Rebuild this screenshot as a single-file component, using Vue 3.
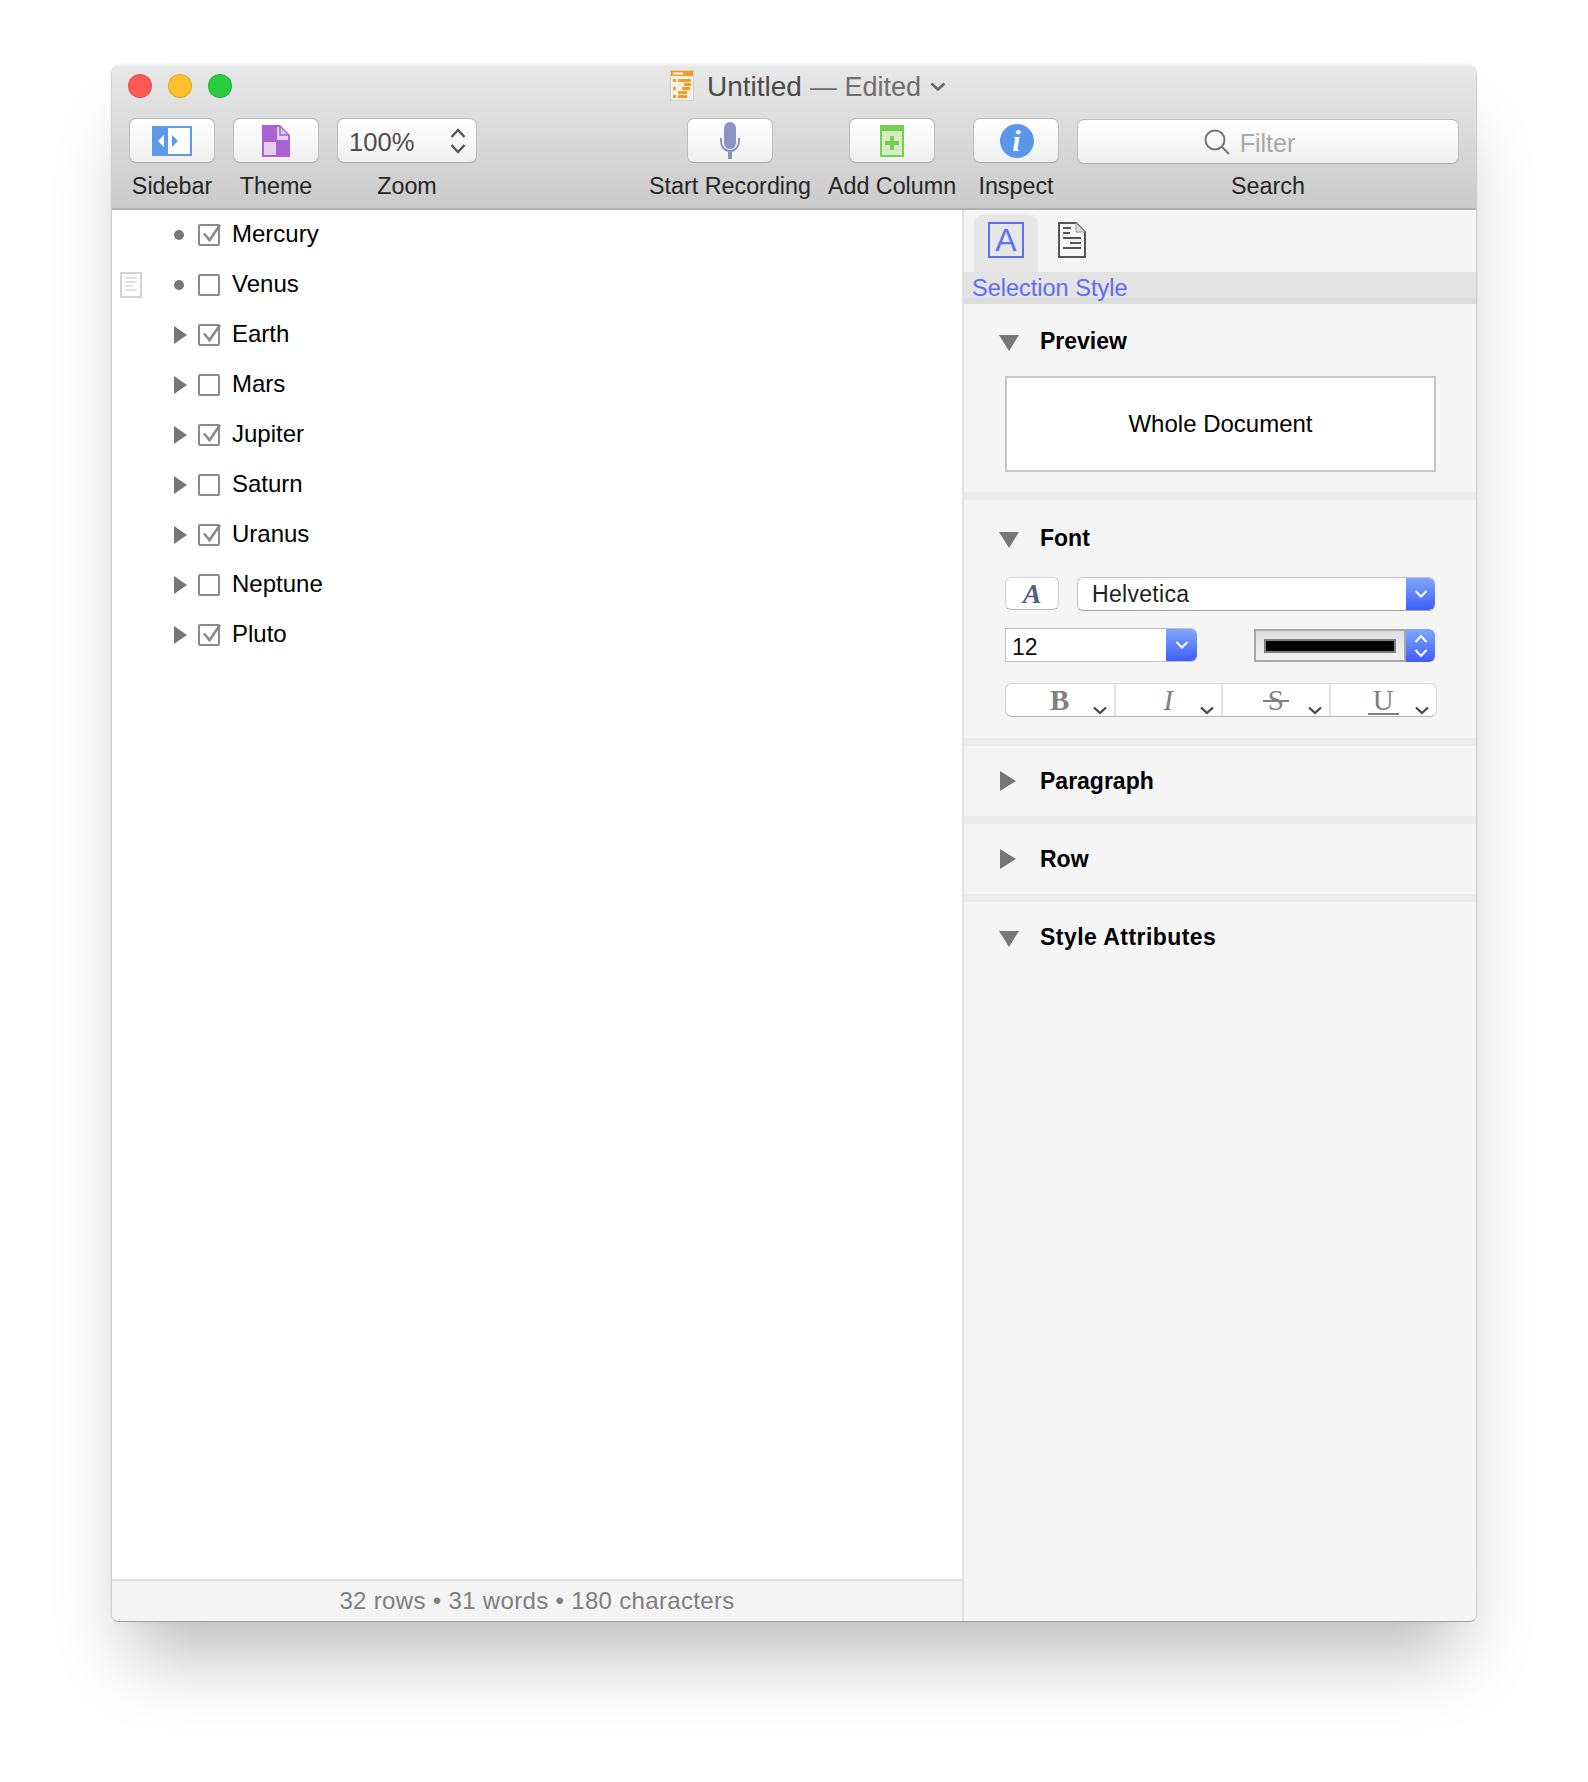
<template>
  <div class="page">
    <div class="window">
      <header class="toolbar">
        <div class="titlebar">
          <div class="lights">
            <span class="light red"></span>
            <span class="light yellow"></span>
            <span class="light green"></span>
          </div>
          <div class="doc-title">
            <svg width="24" height="31" viewBox="0 0 24 31">
              <rect x="0.5" y="0.5" width="23" height="30" fill="#f4f1e8" stroke="#cfcfcf" />
              <rect x="1" y="1" width="22" height="5" fill="#f79a1f" />
              <rect x="3" y="2.5" width="10" height="2" fill="#fff" />
              <rect x="3" y="9" width="3" height="3" fill="#f79a1f" />
              <rect x="8" y="9" width="13" height="3" fill="#f79a1f" />
              <rect x="14" y="13" width="7" height="3" fill="#f79a1f" />
              <rect x="3" y="17" width="3" height="3" fill="#f79a1f" />
              <rect x="12" y="17" width="8" height="3" fill="#f79a1f" />
              <rect x="8" y="21" width="9" height="3" fill="#f79a1f" />
              <rect x="3" y="25" width="3" height="3" fill="#f79a1f" />
              <rect x="8" y="25" width="9" height="3" fill="#f79a1f" />
            </svg>
            <span class="doc-name">Untitled</span>
            <span class="doc-state">— Edited</span>
            <svg class="doc-chevron" width="16" height="10" viewBox="0 0 16 10">
              <path d="M1.5 1.5 L8 7.5 L14.5 1.5" fill="none" stroke="#666" stroke-width="2.4" />
            </svg>
          </div>
        </div>

        <div class="tools">
          <div class="tool sidebar">
            <button class="tbtn">
              <svg width="40" height="30" viewBox="0 0 40 30">
                <rect x="1" y="1" width="38" height="28" fill="#fff" stroke="#5e98ec" stroke-width="2" />
                <rect x="0" y="0" width="16" height="30" fill="#5e98ec" />
                <path d="M12 9 V21 L6 15 Z" fill="#fff" />
                <path d="M20 9 V21 L26 15 Z" fill="#5e98ec" />
              </svg>
            </button>
            <span class="tool-label">Sidebar</span>
          </div>
          <div class="tool theme">
            <button class="tbtn">
              <svg width="28" height="32" viewBox="0 0 28 32">
                <path d="M0 0 H18 L28 10 V32 H0 Z" fill="#a962cf" />
                <path d="M15 2 H18 L26 10 V15 H15 Z" fill="#e1cfeb" />
                <rect x="2" y="17" width="12" height="13" fill="#e1cfeb" />
                <path d="M18 1 V10 H27" fill="none" stroke="#a962cf" stroke-width="1.5" />
              </svg>
            </button>
            <span class="tool-label">Theme</span>
          </div>
          <div class="tool zoom">
            <button class="tbtn zoom-btn">
              <span class="zoom-value">100%</span>
              <svg width="16" height="26" viewBox="0 0 16 26">
                <path d="M1.5 9 L8 2 L14.5 9" fill="none" stroke="#555" stroke-width="2.4" />
                <path d="M1.5 17 L8 24 L14.5 17" fill="none" stroke="#555" stroke-width="2.4" />
              </svg>
            </button>
            <span class="tool-label">Zoom</span>
          </div>
          <div class="tool recording">
            <button class="tbtn">
              <svg width="20" height="37" viewBox="0 0 20 37">
                <rect x="4" y="0" width="12" height="27" rx="6" fill="#8a93c2" />
                <path d="M1 16 V19 C1 25 5 29 10 29 C15 29 19 25 19 19 V16" fill="none" stroke="#8a93c2" stroke-width="2" />
                <rect x="8" y="29" width="4" height="8" fill="#8a93c2" />
              </svg>
            </button>
            <span class="tool-label">Start Recording</span>
          </div>
          <div class="tool column">
            <button class="tbtn">
              <svg width="24" height="32" viewBox="0 0 24 32">
                <rect x="1" y="1" width="22" height="30" fill="#d6ecc8" stroke="#72d24a" stroke-width="2" />
                <rect x="1" y="1" width="22" height="5" fill="#72d24a" />
                <path d="M12 11 V25 M5 18 H19" stroke="#72d24a" stroke-width="4" />
              </svg>
            </button>
            <span class="tool-label">Add Column</span>
          </div>
          <div class="tool inspect">
            <button class="tbtn">
              <span class="info">i</span>
            </button>
            <span class="tool-label">Inspect</span>
          </div>
          <div class="tool search">
            <div class="search-field">
              <svg width="26" height="26" viewBox="0 0 26 26">
                <circle cx="11" cy="11" r="9.5" fill="none" stroke="#757575" stroke-width="2" />
                <path d="M17.5 17.5 L25 25" stroke="#757575" stroke-width="2" />
              </svg>
              <span class="filter">Filter</span>
            </div>
            <span class="tool-label">Search</span>
          </div>
        </div>
      </header>

      <div class="body">
        <main class="outline">
          <div class="rows">
            <div v-for="row in rows" :key="row.name" class="row">
              <div class="gutter">
                <svg v-if="row.note" width="22" height="26" viewBox="0 0 22 26">
                  <rect x="1" y="1" width="20" height="24" fill="#fff" stroke="#d2d2d2" stroke-width="2" />
                  <path d="M5 6 H17 M5 10 H17 M5 14 H13 M5 18 H17" stroke="#e2e2e2" stroke-width="2" />
                </svg>
              </div>
              <div class="marker">
                <span v-if="row.leaf" class="bullet"></span>
                <svg v-else width="13" height="18" viewBox="0 0 13 18">
                  <path d="M0 0 L13 9 L0 18 Z" fill="#777" />
                </svg>
              </div>
              <span class="check">
                <svg v-if="row.checked" width="24" height="24" viewBox="0 0 24 24">
                  <path d="M5 10.5 L10.5 17 L21 2" fill="none" stroke="#8a8a8a" stroke-width="2.6" />
                </svg>
              </span>
              <span class="row-name">{{ row.name }}</span>
            </div>
          </div>
          <footer class="status">32 rows • 31 words • 180 characters</footer>
        </main>

        <aside class="inspector">
          <div class="tabs">
            <div class="tab active">
              <span class="tab-a">A</span>
            </div>
            <div class="tab doc-tab">
              <svg width="28" height="36" viewBox="0 0 28 36">
                <path d="M1 1 H18 L27 10 V35 H1 Z" fill="none" stroke="#555" stroke-width="2" />
                <path d="M18 1 V10 H27" fill="#ddd" stroke="#999" stroke-width="1" />
                <path d="M5 6 H13 M5 11 H12 M5 16 H23 M12 21 H23 M5 26 H23" stroke="#555" stroke-width="2" />
              </svg>
            </div>
          </div>
          <div class="band">Selection Style</div>

          <section class="section preview-section">
            <div class="sec-head">
              <svg class="tri" width="20" height="16" viewBox="0 0 20 16"><path d="M0 0 H20 L10 16 Z" fill="#777" /></svg>
              <span>Preview</span>
            </div>
            <div class="preview">Whole Document</div>
          </section>

          <section class="section font-section">
            <div class="sec-head">
              <svg class="tri" width="20" height="16" viewBox="0 0 20 16"><path d="M0 0 H20 L10 16 Z" fill="#777" /></svg>
              <span>Font</span>
            </div>
            <div class="font-row first">
              <button class="a-btn">A</button>
              <div class="select">
                <span class="select-text">Helvetica</span>
                <span class="blue-cap">
                  <svg width="14" height="10" viewBox="0 0 14 10"><path d="M1.5 2 L7 7.5 L12.5 2" fill="none" stroke="#fff" stroke-width="2" /></svg>
                </span>
              </div>
            </div>
            <div class="font-row second">
              <div class="combo">
                <span class="combo-text">12</span>
                <span class="blue-cap wide">
                  <svg width="14" height="10" viewBox="0 0 14 10"><path d="M1.5 2 L7 7.5 L12.5 2" fill="none" stroke="#fff" stroke-width="2" /></svg>
                </span>
              </div>
              <div class="color-pick">
                <div class="well"><span class="swatch"></span></div>
                <span class="blue-cap">
                  <svg width="14" height="26" viewBox="0 0 14 26">
                    <path d="M1.5 9 L7 3 L12.5 9 M1.5 17 L7 23 L12.5 17" fill="none" stroke="#fff" stroke-width="2" />
                  </svg>
                </span>
              </div>
            </div>
            <div class="styles">
              <div v-for="s in textStyles" :key="s.key" class="style-cell">
                <span class="style-letter" :class="s.key">{{ s.label }}</span>
                <svg class="style-chev" width="14" height="9" viewBox="0 0 14 9">
                  <path d="M1 1.5 L7 7 L13 1.5" fill="none" stroke="#444" stroke-width="2.2" />
                </svg>
              </div>
            </div>
          </section>

          <section class="section">
            <div class="sec-head">
              <svg class="tri right" width="16" height="20" viewBox="0 0 16 20"><path d="M0 0 L16 10 L0 20 Z" fill="#777" /></svg>
              <span>Paragraph</span>
            </div>
          </section>
          <section class="section">
            <div class="sec-head">
              <svg class="tri right" width="16" height="20" viewBox="0 0 16 20"><path d="M0 0 L16 10 L0 20 Z" fill="#777" /></svg>
              <span>Row</span>
            </div>
          </section>
          <section class="section last">
            <div class="sec-head">
              <svg class="tri" width="20" height="16" viewBox="0 0 20 16"><path d="M0 0 H20 L10 16 Z" fill="#777" /></svg>
              <span class="attrs">Style Attributes</span>
            </div>
          </section>
        </aside>
      </div>
    </div>
  </div>
</template>

<script setup>
const rows = [
  { name: 'Mercury', leaf: true, checked: true },
  { name: 'Venus', leaf: true, checked: false, note: true },
  { name: 'Earth', checked: true },
  { name: 'Mars', checked: false },
  { name: 'Jupiter', checked: true },
  { name: 'Saturn', checked: false },
  { name: 'Uranus', checked: true },
  { name: 'Neptune', checked: false },
  { name: 'Pluto', checked: true },
]

const textStyles = [
  { key: 'bold', label: 'B' },
  { key: 'italic', label: 'I' },
  { key: 'strike', label: 'S' },
  { key: 'under', label: 'U' },
]
</script>

<style>
html, body {
  background: #fff;
}
</style>

<style scoped>
.page {
  box-sizing: border-box;
  height: 1782px;
  padding: 64px 0 0 111px;
  overflow: hidden;
}

.window {
  box-sizing: border-box;
  width: 1366px;
  height: 1558px;
  display: flex;
  flex-direction: column;
  border-radius: 10px 10px 8px 8px;
  border-left: 1px solid #cfcfcf;
  border-right: 1px solid #cfcfcf;
  border-bottom: 1px solid #a0a0a0;
  background: #fff;
  box-shadow: 0 52px 70px -20px rgba(0, 0, 0, 0.27), 0 0 2px rgba(0, 0, 0, 0.1);
  font-family: "Liberation Sans", Arial, sans-serif;
  overflow: hidden;
}

.toolbar {
  box-sizing: border-box;
  height: 146px;
  flex: none;
  background: linear-gradient(#f0f0f0 0, #f0f0f0 2px, #e8e8e8 2px, #cbcbcb);
  border-bottom: 2px solid #b2b2b2;
}

.titlebar {
  position: relative;
  height: 54px;
}

.lights {
  display: flex;
  gap: 16px;
  padding: 10px 0 0 16px;
}

.light {
  box-sizing: border-box;
  width: 24px;
  height: 24px;
  border-radius: 50%;
  border: 1px solid rgba(0, 0, 0, 0.12);
}

.red { background: #fc5b57; }
.yellow { background: #fdbf2e; }
.green { background: #29cb40; }

.doc-title {
  position: absolute;
  left: 558px;
  top: 6px;
  display: flex;
  align-items: center;
  height: 31px;
  font-size: 27px;
  white-space: nowrap;
}

.doc-name {
  margin-left: 13px;
  padding-top: 2px;
  font-size: 28px;
  color: #4a4a4a;
}

.doc-state {
  margin-left: 8px;
  padding-top: 3px;
  color: #6e6e6e;
}

.doc-chevron {
  margin: 2px 0 0 9px;
}

.tools {
  display: flex;
  gap: 18px;
  padding-left: 17px;
}

.tool {
  display: flex;
  flex-direction: column;
  align-items: center;
  flex: none;
  width: 86px;
}

.tool.zoom { width: 140px; }
.tool.recording { width: 162px; margin-left: 154px; }
.tool.column { width: 126px; }
.tool.search { width: 382px; }

.tool-label {
  margin-top: 10px;
  height: 26px;
  line-height: 26px;
  font-size: 23.3px;
  color: #262626;
  white-space: nowrap;
}

.tbtn {
  box-sizing: border-box;
  display: flex;
  align-items: center;
  justify-content: center;
  width: 86px;
  height: 45px;
  padding: 0;
  border: 1px solid #bcbcbc;
  border-bottom-color: #a9a9a9;
  border-radius: 7px;
  background: linear-gradient(#ffffff, #f0f0f0);
  font-family: inherit;
}

.zoom-btn {
  width: 140px;
  justify-content: space-between;
  padding: 0 10px 0 11px;
}

.zoom-value {
  padding-top: 3px;
  font-size: 25.6px;
  color: #4d4d4d;
}

.info {
  width: 34px;
  height: 34px;
  margin-left: 1px;
  border-radius: 50%;
  background: #5a96ea;
  color: #fff;
  font: italic bold 30px/34px "Liberation Serif", serif;
  text-align: center;
}

.search-field {
  box-sizing: border-box;
  display: flex;
  align-items: center;
  justify-content: center;
  gap: 10px;
  width: 382px;
  height: 45px;
  margin-top: 1px;
  padding-right: 37px;
  border: 1px solid #bcbcbc;
  border-bottom-color: #a9a9a9;
  border-radius: 7px;
  background: linear-gradient(#ffffff, #f0f0f0);
}

.search-field + .tool-label {
  margin-top: 9px;
}

.filter {
  padding-top: 3px;
  font-size: 25px;
  color: #a9a9a9;
}

.body {
  flex: 1;
  display: flex;
  min-height: 0;
}

.outline {
  width: 850px;
  flex: none;
  display: flex;
  flex-direction: column;
}

.rows {
  flex: 1;
}

.row {
  display: flex;
  align-items: center;
  height: 50px;
}

.gutter {
  width: 22px;
  height: 26px;
  margin-left: 8px;
}

.marker {
  width: 13px;
  margin-left: 32px;
  display: flex;
  align-items: center;
  justify-content: center;
}

.bullet {
  flex: none;
  width: 10px;
  height: 10px;
  margin-right: 4px;
  border-radius: 50%;
  background: #777;
}

.check {
  box-sizing: border-box;
  position: relative;
  width: 22px;
  height: 22px;
  margin-left: 11px;
  border: 2px solid #8a8a8a;
  border-radius: 2px;
  background: #fff;
}

.check svg {
  position: absolute;
  left: -1px;
  top: -3px;
}

.row-name {
  margin: -2px 0 0 12px;
  font-size: 24px;
  color: #000;
}

.status {
  box-sizing: border-box;
  height: 42px;
  flex: none;
  border-top: 2px solid #dfdfdf;
  background: #f4f4f4;
  color: #7f7f7f;
  font-size: 24px;
  letter-spacing: 0.33px;
  line-height: 40px;
  text-align: center;
}

.inspector {
  flex: 1;
  display: flex;
  flex-direction: column;
  border-left: 2px solid #e0e0e0;
  background: #f5f5f5;
}

.tabs {
  display: flex;
  height: 62px;
  flex: none;
  padding: 4px 0 0 10px;
  box-sizing: border-box;
}

.tab {
  width: 64px;
  display: flex;
  align-items: flex-start;
  justify-content: center;
  padding-top: 8px;
  border-radius: 10px 10px 0 0;
}

.tab.active {
  background: #e6e6e6;
}

.doc-tab svg {
  margin-left: 4px;
}

.tab-a {
  box-sizing: border-box;
  width: 36px;
  height: 36px;
  border: 2px solid #5a70f8;
  color: #5a70f8;
  font-size: 32px;
  line-height: 32px;
  text-align: center;
}

.band {
  box-sizing: border-box;
  height: 32px;
  flex: none;
  padding-left: 8px;
  background: #e3e3e3;
  border-bottom: 6px solid #dcdcdc;
  color: #5a6bfb;
  font-size: 23.5px;
  line-height: 33px;
}

.section {
  flex: none;
  border-bottom: 8px solid #ebebeb;
}

.section.last {
  flex: 1;
  border-bottom: 0;
}

.preview-section {
  padding-top: 2px;
  padding-bottom: 20px;
}

.font-section {
  padding-top: 3px;
  padding-bottom: 21px;
}

.sec-head {
  display: flex;
  align-items: center;
  height: 70px;
  padding-left: 35px;
  font-size: 23px;
  font-weight: 700;
  color: #000;
}

.tri {
  width: 20px;
  margin-top: 3px;
  margin-right: 21px;
}

.tri.right {
  margin-top: 0;
  margin-left: -1px;
  margin-right: 22px;
}

.attrs {
  letter-spacing: 0.45px;
}

.preview {
  box-sizing: border-box;
  width: 431px;
  height: 96px;
  margin-left: 41px;
  border: 2px solid #c6c6c6;
  background: #fff;
  color: #000;
  font-size: 24px;
  line-height: 92px;
  text-align: center;
}

.font-row {
  display: flex;
  margin-left: 41px;
  width: 430px;
  height: 34px;
}

.font-row.first {
  margin-top: 4px;
  gap: 18px;
}

.font-row.second {
  margin-top: 17px;
  justify-content: space-between;
}

.a-btn {
  box-sizing: border-box;
  width: 54px;
  height: 33px;
  padding: 0;
  border: 1px solid #d0d0d0;
  border-bottom-color: #b8b8b8;
  border-radius: 6px;
  background: #fff;
  color: #4f5f85;
  font: italic bold 28px/30px "Liberation Serif", serif;
}

.select {
  flex: 1;
  display: flex;
  overflow: hidden;
  box-sizing: border-box;
  border: 1px solid #c0c0c0;
  border-bottom-color: #a8a8a8;
  border-right: 0;
  border-radius: 6px;
  background: #fff;
}

.select-text {
  flex: 1;
  padding-left: 14px;
  font-size: 23px;
  line-height: 33px;
  color: #222;
  letter-spacing: 0.3px;
}

.blue-cap {
  width: 29px;
  flex: none;
  display: flex;
  align-items: center;
  justify-content: center;
  background: linear-gradient(#7fa8fd, #3f5cff);
  border-radius: 0 6px 6px 0;
}

.blue-cap.wide {
  width: 31px;
}

.combo {
  box-sizing: border-box;
  width: 192px;
  display: flex;
  border: 1px solid #c0c0c0;
  border-right: 0;
  border-radius: 0 6px 6px 0;
  background: #fff;
}

.combo-text {
  flex: 1;
  padding-left: 6px;
  font-size: 23px;
  line-height: 36px;
  color: #111;
}

.color-pick {
  display: flex;
  width: 181px;
  margin-top: 1px;
}

.well {
  box-sizing: border-box;
  flex: 1;
  display: flex;
  align-items: center;
  justify-content: center;
  border: 2px solid #a8a8a8;
  background: linear-gradient(#dedede, #f2f2f2);
}

.swatch {
  box-sizing: border-box;
  width: 132px;
  height: 14px;
  background: #000;
  border: 2px solid #808080;
}

.styles {
  box-sizing: border-box;
  display: grid;
  grid-template-columns: repeat(4, 1fr);
  width: 432px;
  height: 34px;
  margin: 21px 0 0 41px;
  border: 1px solid #d4d4d4;
  border-bottom-color: #b5b5b5;
  border-radius: 7px;
  background: #fff;
}

.style-cell {
  position: relative;
  display: flex;
  align-items: center;
  justify-content: center;
  border-left: 2px solid #e2e2e2;
}

.style-cell:first-child {
  border-left: 0;
}

.style-letter {
  position: relative;
  color: #808080;
  font-family: "Liberation Serif", serif;
  font-size: 29px;
  line-height: 30px;
}

.style-letter.bold { font-weight: 700; }
.style-letter.italic { font-style: italic; }

.style-letter.strike::after,
.style-letter.under::after {
  content: "";
  position: absolute;
  left: -5px;
  right: -5px;
  height: 2px;
  background: #808080;
}

.style-letter.strike::after { top: 15px; }
.style-letter.under::after { bottom: 0; }

.style-chev {
  position: absolute;
  right: 7px;
  bottom: 1px;
}
</style>
